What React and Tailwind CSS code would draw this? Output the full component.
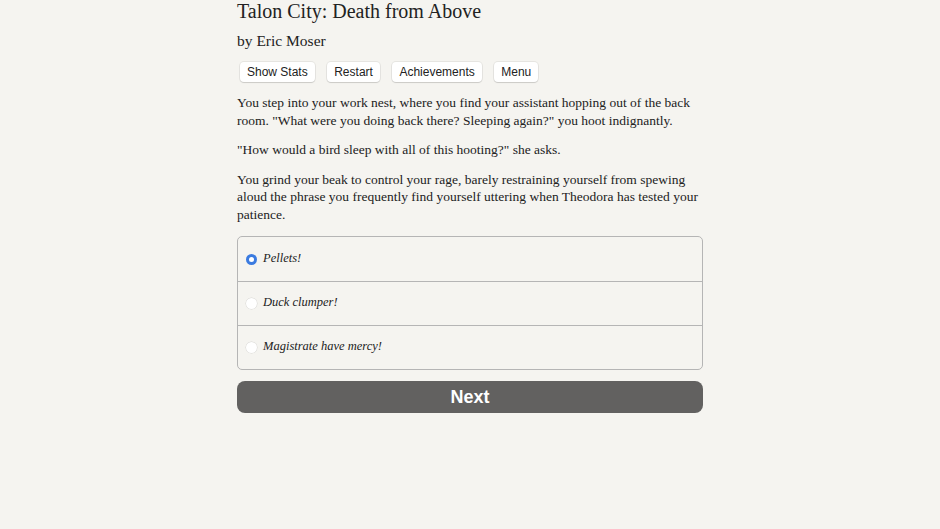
const CHOICES = ["Pellets!", "Duck clumper!", "Magistrate have mercy!"];

const BUTTONS = ["Show Stats", "Restart", "Achievements", "Menu"];

export default function App() {
  const serif = { fontFamily: '"Liberation Serif", "DejaVu Serif", serif' };

  return (
    <div className="min-h-screen w-full bg-[#f5f4f0] text-[#222]" style={serif}>
      <div className="mx-auto w-[466px]">
        <h1 className="text-[20px] leading-[22px]">Talon City: Death from Above</h1>
        <div className="mt-[10px] text-[15.5px] leading-[18px]">by Eric Moser</div>

        <div className="mt-[12px] flex gap-[12.5px] pl-[3px]">
          {BUTTONS.map((label) => (
            <button
              key={label}
              className="h-[20px] rounded-[4px] bg-white px-[7px] text-[12px] leading-[20px] text-[#222] shadow-[0_0_0_1px_rgba(0,0,0,0.06),0_1px_1px_rgba(0,0,0,0.12)] font-['Liberation_Sans',Arial,sans-serif]"
            >
              {label}
            </button>
          ))}
        </div>

        <div className="mt-[12px] text-[13.5px] leading-[17.5px]">
          <p>
            You step into your work nest, where you find your assistant hopping out of the back
            room. "What were you doing back there? Sleeping again?" you hoot indignantly.
          </p>
          <p className="mt-[12px]">"How would a bird sleep with all of this hooting?" she asks.</p>
          <p className="mt-[12px]">
            You grind your beak to control your rage, barely restraining yourself from spewing
            aloud the phrase you frequently find yourself uttering when Theodora has tested your
            patience.
          </p>
        </div>

        <div className="mt-[13px] rounded-[5px] border border-[#b5b5b5]">
          {CHOICES.map((choice, i) => (
            <label
              key={choice}
              className={`flex h-[44px] items-center pl-[8px] ${i > 0 ? "border-t border-[#b5b5b5]" : ""}`}
            >
              {i === 0 ? (
                <span className="flex h-[11px] w-[11px] items-center justify-center rounded-full bg-[#3b7be0]">
                  <span className="h-[5px] w-[5px] rounded-full bg-white" />
                </span>
              ) : (
                <span className="h-[11px] w-[11px] rounded-full bg-white shadow-[0_0_0_0.5px_rgba(0,0,0,0.12)]" />
              )}
              <span className="ml-[6px] -mt-[2px] text-[12.5px] italic">{choice}</span>
            </label>
          ))}
        </div>

        <button className="mt-[11px] h-[32px] w-full rounded-[8px] bg-[#626160] pt-[1px] text-[18px] font-bold text-white font-['Liberation_Sans',Arial,sans-serif]">
          Next
        </button>
      </div>
    </div>
  );
}
